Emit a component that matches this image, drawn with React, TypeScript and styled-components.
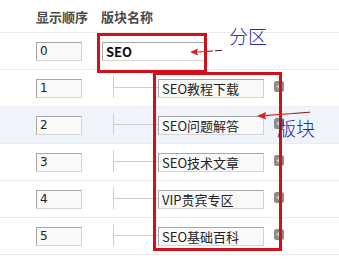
import React from 'react';
import styled, { createGlobalStyle } from 'styled-components';

const GlobalStyle = createGlobalStyle`
  html, body {
    margin: 0;
    padding: 0;
    background: #fff;
  }
  body {
    font-family: "Liberation Sans", "Noto Sans CJK SC", sans-serif;
  }
`;

const forums = [
  { order: 1, name: 'SEO教程下载' },
  { order: 2, name: 'SEO问题解答' },
  { order: 3, name: 'SEO技术文章' },
  { order: 4, name: 'VIP贵宾专区' },
  { order: 5, name: 'SEO基础百科' },
];

const PlusIcon: React.FC = () => (
  <svg width="10" height="11" viewBox="0 0 10 11">
    <rect x="0" y="0" width="10" height="11" rx="2.5" fill="#8c8c8c" />
    <path d="M2.5 5.5h5M5 3v5" stroke="#d8d8d8" strokeWidth="1.4" />
  </svg>
);

const App: React.FC = () => {
  return (
    <>
      <GlobalStyle />
      <Board>
        <HeaderRow>
          <HeadCell>显示顺序</HeadCell>
          <HeadName>版块名称</HeadName>
        </HeaderRow>

        <Row>
          <OrderInput defaultValue="0" />
          <CategoryInput defaultValue="SEO" />
        </Row>

        {forums.map(f => (
          <Row key={f.order} $shaded={f.order === 2}>
            <OrderInput defaultValue={String(f.order)} />
            <Connector />
            <ForumInput defaultValue={f.name} />
            <AddButton>
              <PlusIcon />
            </AddButton>
          </Row>
        ))}

        <Highlight $left={97} $top={33} $w={110} $h={40} />
        <Highlight $left={153} $top={72} $w={129} $h={179} />

        <Label $left={229} $top={24}>分区</Label>
        <Label $left={277} $top={116}>版块</Label>

        <Arrows width="339" height="259" viewBox="0 0 339 259">
          <path d="M190 52 L198 48.5 L197 52 L198 55.5 Z" fill="#e0201a" />
          <line x1="196" y1="52" x2="206" y2="51.5" stroke="#e0201a" strokeWidth="1.2" />
          <path d="M207 51.3 L213 51 M215 50.8 L222 50.3" stroke="#5a1010" strokeWidth="1" />
          <path d="M257 116 L266 112 L265 116 L266 119.5 Z" fill="#e0201a" />
          <line x1="264" y1="115.6" x2="293" y2="113.5" stroke="#e0201a" strokeWidth="1.2" />
          <line x1="293" y1="113.5" x2="310" y2="112.2" stroke="#8a1515" strokeWidth="1" />
        </Arrows>
      </Board>
    </>
  );
};

const Board = styled.div`
  position: relative;
  width: 339px;
  height: 259px;
  overflow: hidden;
  background: #fff;
`;

const HeaderRow = styled.div`
  display: flex;
  align-items: center;
  height: 32px;
  padding-left: 36px;
  border-bottom: 1px solid #ececec;
`;

const HeadCell = styled.div`
  font-family: "Noto Sans CJK SC", sans-serif;
  font-weight: 700;
  font-size: 13px;
  color: #4a4a4a;
  width: 65px;
  line-height: 16px;
  padding-top: 2px;
`;

const HeadName = styled(HeadCell)`
  width: auto;
`;

const Row = styled.div<{ $shaded?: boolean }>`
  display: flex;
  align-items: center;
  height: 36px;
  padding-left: 36px;
  border-bottom: 1px solid #ececec;
  background: ${p => (p.$shaded ? '#eef4fa' : '#fff')};
`;

const TextBox = styled.input`
  box-sizing: border-box;
  height: 19px;
  margin: 0;
  padding: 0 3px;
  border: 1px solid #a7a7a7;
  border-right-color: #d4d4d4;
  border-bottom-color: #d4d4d4;
  background: #f9f9f9;
  color: #222;
  font-family: "Noto Sans CJK SC", sans-serif;
  font-size: 13px;
  line-height: 17px;
  outline: none;
`;

const OrderInput = styled(TextBox)`
  width: 46px;
  font-family: "DejaVu Sans", sans-serif;
  font-size: 12px;
`;

const CategoryInput = styled(TextBox)`
  width: 103px;
  margin-left: 20px;
  font-weight: 700;
  background: #fff;
  color: #111;
`;

const Connector = styled.span`
  display: block;
  width: 44px;
  height: 22px;
  margin-left: 31px;
  margin-top: -2px;
  border-left: 1px solid #cfcfcf;
  background: linear-gradient(#cfcfcf, #cfcfcf) no-repeat left 11px / 100% 1px;
`;

const ForumInput = styled(TextBox)`
  width: 106px;
`;

const AddButton = styled.span`
  display: flex;
  margin-left: 10px;
  margin-top: -4px;
`;

const Highlight = styled.div<{ $left: number; $top: number; $w: number; $h: number }>`
  position: absolute;
  box-sizing: border-box;
  left: ${p => p.$left}px;
  top: ${p => p.$top}px;
  width: ${p => p.$w}px;
  height: ${p => p.$h}px;
  border: 3px solid #d0111a;
  pointer-events: none;
`;

const Label = styled.div<{ $left: number; $top: number }>`
  position: absolute;
  left: ${p => p.$left}px;
  top: ${p => p.$top}px;
  font-family: "Noto Sans CJK SC", sans-serif;
  font-weight: 300;
  font-size: 19px;
  line-height: 24px;
  color: #2a2aa8;
`;

const Arrows = styled.svg`
  position: absolute;
  left: 0;
  top: 0;
  pointer-events: none;
`;

export default App;
